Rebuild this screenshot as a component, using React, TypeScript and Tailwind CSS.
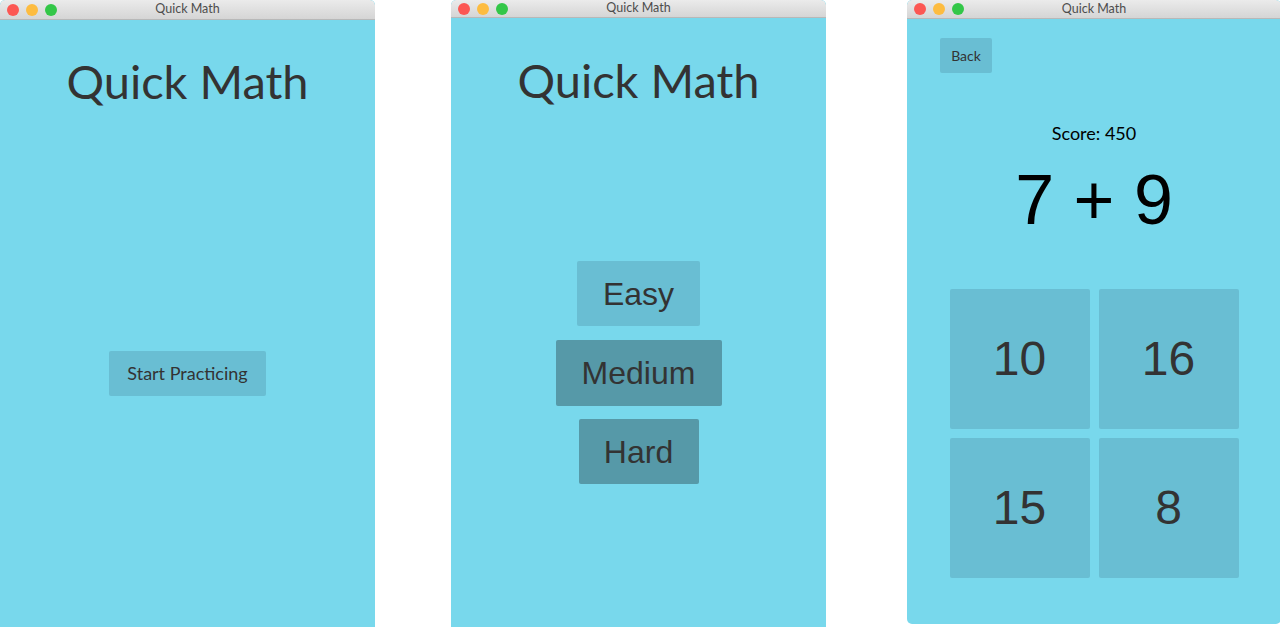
import React from 'react'

const avenir = "font-['Lato','Noto_Sans',sans-serif]"
const helv = "font-['Liberation_Sans',Arial,sans-serif]"

function TitleBar({ h }: { h: string }) {
  return (
    <div
      className={`relative flex ${h} shrink-0 items-center justify-center rounded-t-[5px] border-b border-[#b8b8b8] bg-gradient-to-b from-[#ebebeb] to-[#d5d5d5]`}
    >
      <div className="absolute left-[7px] top-1/2 flex -translate-y-1/2 gap-[7px]">
        <span className="h-3 w-3 rounded-full bg-[#fc5753]" />
        <span className="h-3 w-3 rounded-full bg-[#fdbc40]" />
        <span className="h-3 w-3 rounded-full bg-[#33c748]" />
      </div>
      <span className={`${avenir} text-[12.5px] text-[#4d4d4d]`}>Quick Math</span>
    </div>
  )
}

function Window({
  className,
  bar,
  children,
}: {
  className: string
  bar: string
  children: React.ReactNode
}) {
  return (
    <div className={`flex shrink-0 flex-col overflow-hidden bg-[#78d8ec] ${className}`}>
      <TitleBar h={bar} />
      <div className="relative flex flex-1 flex-col">{children}</div>
    </div>
  )
}

function Heading() {
  return (
    <h1 className={`${avenir} text-center text-[47px] leading-none text-[#333]`}>Quick Math</h1>
  )
}

export default function App() {
  const answers = ['10', '16', '15', '8']
  return (
    <div className="flex h-[627px] w-[1280px] overflow-hidden bg-white">
      <Window className="h-[627px] w-[375px] rounded-t-[5px]" bar="h-[20px]">
        <div className="pt-[38px]">
          <Heading />
        </div>
        <div className="mt-[246px] flex justify-center">
          <button
            className={`${avenir} h-[45px] w-[157px] rounded-[2px] bg-[#69bed3] text-[18px] text-[#333]`}
          >
            Start Practicing
          </button>
        </div>
      </Window>

      <Window className="ml-[76px] h-[627px] w-[375px] rounded-t-[5px]" bar="h-[18px]">
        <div className="pt-[39px]">
          <Heading />
        </div>
        <div className={`${helv} mt-[157px] flex flex-col items-center gap-[14px] text-[32px] text-[#333]`}>
          <button className="h-[65px] w-[123px] rounded-[2px] bg-[#69bed3]">Easy</button>
          <button className="h-[66px] w-[166px] rounded-[2px] bg-[#5699a8]">Medium</button>
          <button className="-mt-px h-[65px] w-[120px] rounded-[2px] bg-[#5699a8]">Hard</button>
        </div>
      </Window>

      <Window className="ml-[81px] h-[624px] w-[374px] rounded-[5px]" bar="h-[19px]">
        <div className="px-[33px] pt-[19px]">
          <button
            className={`${avenir} h-[35px] w-[52px] rounded-[2px] bg-[#69bed3] text-[14px] text-[#333]`}
          >
            Back
          </button>
        </div>
        <p className={`${avenir} mt-[51px] text-center text-[18px] leading-none text-black`}>Score: 450</p>
        <p className={`${helv} mt-[23px] text-center text-[70px] leading-none text-black`}>7 + 9</p>
        <div className="mt-[54px] grid grid-cols-[140px_140px] justify-center gap-[9px]">
          {answers.map((a) => (
            <button
              key={a}
              className={`${helv} h-[140px] w-[140px] rounded-[2px] bg-[#69bed3] text-[48px] text-[#333]`}
            >
              {a}
            </button>
          ))}
        </div>
      </Window>
    </div>
  )
}
